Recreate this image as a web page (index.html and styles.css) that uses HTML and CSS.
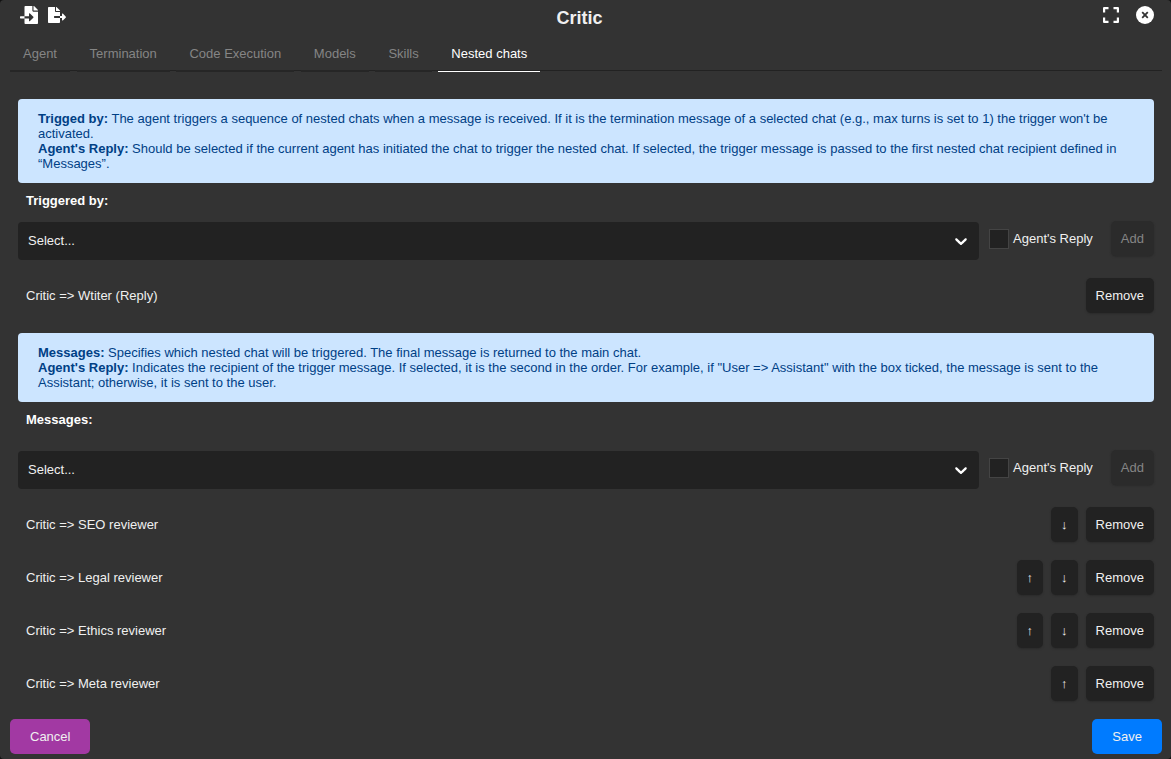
FILE: index.html
```html
<!DOCTYPE html>
<html lang="en">
<head>
<meta charset="utf-8">
<meta name="viewport" content="width=device-width, initial-scale=1">
<title>Critic</title>
<link rel="stylesheet" href="styles.css">
</head>
<body>
<main class="modal">
  <header class="header">
    <div class="tools">
      <button class="icon-btn" type="button" aria-label="Import">
        <svg width="18" height="18" viewBox="0 0 512 512" fill="currentColor"><path d="M16 288c-8.800 0-16 7.200-16 16v32c0 8.800 7.200 16 16 16h112v-64zm489-183L407.100 7c-4.500-4.500-10.600-7-17-7H384v128h128v-6.100c0-6.300-2.500-12.400-7-16.900zm-153 31V0H152c-13.300 0-24 10.700-24 24v264h128v-65.200c0-14.300 17.300-21.400 27.400-11.300L379 308c6.600 6.700 6.600 17.400 0 24l-95.700 96.400c-10.100 10.100-27.400 3-27.400-11.300V352H128v136c0 13.300 10.700 24 24 24h336c13.300 0 24-10.700 24-24V160H376c-13.200 0-24-10.800-24-24z"/></svg>
      </button>
      <button class="icon-btn" type="button" aria-label="Export">
        <svg width="18" height="16" viewBox="0 0 576 512" fill="currentColor"><path d="M384 121.900c0-6.300-2.500-12.400-7-16.900L279.100 7c-4.500-4.500-10.600-7-17-7H256v128h128zM571 308l-95.700-96.400c-10.100-10.100-27.400-3-27.400 11.300V288h-64v64h64v65.200c0 14.300 17.300 21.400 27.400 11.300L571 332c6.600-6.600 6.600-17.400 0-24zm-379 28v-32c0-8.800 7.200-16 16-16h176V160H248c-13.200 0-24-10.800-24-24V0H24C10.700 0 0 10.700 0 24v464c0 13.300 10.700 24 24 24h336c13.300 0 24-10.700 24-24V352H208c-8.800 0-16-7.200-16-16z"/></svg>
      </button>
    </div>
    <h1 class="title">Critic</h1>
    <div class="tools tools-end">
      <button class="icon-btn" type="button" aria-label="Full screen">
        <svg width="16" height="16" viewBox="0 0 16 16" fill="none" stroke="currentColor" stroke-width="2.200" stroke-linejoin="round"><path d="M1.100 5.500V1.100H5.500M10.500 1.100h4.400V5.500M14.900 10.500v4.400H10.500M5.500 14.900H1.100V10.500"/></svg>
      </button>
      <button class="icon-btn" type="button" aria-label="Close">
        <svg width="18" height="18" viewBox="0 0 18 18"><circle cx="9" cy="9" r="9" fill="currentColor"/><path d="M6.200 6.200l5.600 5.600M11.800 6.200l-5.600 5.600" stroke="#333" stroke-width="1.800"/></svg>
      </button>
    </div>
  </header>

  <nav class="tabs">
    <a class="tab" href="#agent">Agent</a>
    <a class="tab" href="#termination">Termination</a>
    <a class="tab" href="#code">Code Execution</a>
    <a class="tab" href="#models">Models</a>
    <a class="tab" href="#skills">Skills</a>
    <a class="tab active" href="#nested" aria-current="page">Nested chats</a>
  </nav>

  <section class="content" id="nested">
    <div class="alert">
      <p><strong>Trigged by:</strong> The agent triggers a sequence of nested chats when a message is received. If it is the termination message of a selected chat (e.g., max turns is set to 1) the trigger won't be activated.</p>
      <p><strong>Agent's Reply:</strong> Should be selected if the current agent has initiated the chat to trigger the nested chat. If selected, the trigger message is passed to the first nested chat recipient defined in “Messages”.</p>
    </div>
    <label class="field-label" for="trigger">Triggered by:</label>
    <div class="picker">
      <div class="select-wrap">
        <select class="select" id="trigger"><option>Select...</option></select>
        <svg class="chevron" width="20" height="20" viewBox="0 0 20 20" fill="currentColor"><path d="M4.516 7.548c0.436-0.446 1.043-0.481 1.576 0l3.908 3.747 3.908-3.747c0.533-0.481 1.141-0.446 1.574 0 0.436 0.445 0.408 1.197 0 1.615-0.406 0.418-4.695 4.502-4.695 4.502-0.217 0.223-0.502 0.335-0.787 0.335s-0.570-0.112-0.789-0.335c0 0-4.287-4.084-4.695-4.502s-0.436-1.170 0-1.615z"/></svg>
      </div>
      <label class="check"><input class="checkbox" type="checkbox">Agent's Reply</label>
      <button class="btn" type="button" disabled>Add</button>
    </div>
    <ul class="list">
      <li class="row"><span class="name">Critic =&gt; Wtiter (Reply)</span><button class="btn" type="button">Remove</button></li>
    </ul>

    <div class="alert alert-next">
      <p><strong>Messages:</strong> Specifies which nested chat will be triggered. The final message is returned to the main chat.</p>
      <p><strong>Agent's Reply:</strong> Indicates the recipient of the trigger message. If selected, it is the second in the order. For example, if "User =&gt; Assistant" with the box ticked, the message is sent to the Assistant; otherwise, it is sent to the user.</p>
    </div>
    <label class="field-label field-label-tall" for="messages">Messages:</label>
    <div class="picker">
      <div class="select-wrap">
        <select class="select" id="messages"><option>Select...</option></select>
        <svg class="chevron" width="20" height="20" viewBox="0 0 20 20" fill="currentColor"><path d="M4.516 7.548c0.436-0.446 1.043-0.481 1.576 0l3.908 3.747 3.908-3.747c0.533-0.481 1.141-0.446 1.574 0 0.436 0.445 0.408 1.197 0 1.615-0.406 0.418-4.695 4.502-4.695 4.502-0.217 0.223-0.502 0.335-0.787 0.335s-0.570-0.112-0.789-0.335c0 0-4.287-4.084-4.695-4.502s-0.436-1.170 0-1.615z"/></svg>
      </div>
      <label class="check"><input class="checkbox" type="checkbox">Agent's Reply</label>
      <button class="btn" type="button" disabled>Add</button>
    </div>
    <ul class="list">
      <li class="row"><span class="name">Critic =&gt; SEO reviewer</span><button class="btn" type="button" aria-label="Move down">↓</button><button class="btn" type="button">Remove</button></li>
      <li class="row"><span class="name">Critic =&gt; Legal reviewer</span><button class="btn" type="button" aria-label="Move up">↑</button><button class="btn" type="button" aria-label="Move down">↓</button><button class="btn" type="button">Remove</button></li>
      <li class="row"><span class="name">Critic =&gt; Ethics reviewer</span><button class="btn" type="button" aria-label="Move up">↑</button><button class="btn" type="button" aria-label="Move down">↓</button><button class="btn" type="button">Remove</button></li>
      <li class="row"><span class="name">Critic =&gt; Meta reviewer</span><button class="btn" type="button" aria-label="Move up">↑</button><button class="btn" type="button">Remove</button></li>
    </ul>
  </section>

  <footer class="footer">
    <button class="btn btn-cancel" type="button">Cancel</button>
    <button class="btn btn-save" type="button">Save</button>
  </footer>
</main>
</body>
</html>
```

FILE: styles.css
```css
* { box-sizing: border-box; }

body {
  margin: 0;
  background: #111;
  color: #f0f0f0;
  font: 13px/15px "Liberation Sans", Arial, sans-serif;
}

p, ul, h1 { margin: 0; padding: 0; }
button, select { font: inherit; color: inherit; }

.modal {
  min-height: 100vh;
  padding: 0 9px 5px 10px;
  background: #333;
  border-radius: 4px;
}

.header {
  display: flex;
  align-items: flex-start;
  padding: 6px 8px 0 10px;
  height: 36px;
}

.tools { display: flex; gap: 10px; }
.tools-end { gap: 17px; margin-left: 10px; }

.icon-btn {
  display: flex;
  align-items: center;
  height: 18px;
  padding: 0;
  border: 0;
  background: none;
  color: #fff;
}

.title {
  flex: 1;
  text-align: center;
  font-size: 18px;
  line-height: 24px;
}

.tabs {
  height: 35px;
  border-bottom: 1px solid #222;
}

.tab {
  display: inline-block;
  height: 36px;
  margin-right: 3px;
  padding: 10px 13px;
  border-bottom: 2px solid #262626;
  color: #858585;
  text-decoration: none;
}

.tab.active { color: #fff; border-bottom: 1px solid #fff; }

.content { padding: 28px 8px 0; }

.alert {
  padding: 12px 20px;
  border-radius: 4px;
  background: #cce5ff;
  color: #004085;
}

.alert-next { margin-top: 11px; }

.field-label {
  display: block;
  padding: 10px 8px 13px;
  font-weight: bold;
  color: #fff;
}

.field-label-tall { padding-bottom: 23px; }

.picker {
  display: flex;
  align-items: flex-start;
  min-height: 39px;
  margin-bottom: 9px;
}

.select-wrap {
  position: relative;
  flex: 1;
  align-self: flex-end;
  margin-right: 10px;
}

.select {
  display: block;
  width: 100%;
  height: 38px;
  padding: 0 10px 2px;
  border: 0;
  border-radius: 4px;
  appearance: none;
  background: #222;
}

.chevron {
  position: absolute;
  top: 9px;
  right: 8px;
  color: #fff;
  pointer-events: none;
}

.check {
  display: flex;
  align-items: center;
  gap: 4px;
  height: 35px;
  margin-right: 18px;
}

.checkbox {
  width: 20px;
  height: 20px;
  margin: 0;
  appearance: none;
  border: 1px solid #444;
  background: #222;
}

.btn {
  height: 35px;
  padding: 0 10px;
  border: 0;
  border-radius: 5px;
  background: #222;
  box-shadow: 0 1px 2px #2a2a2a;
}

.btn:disabled { background: #2b2b2b; color: #858585; }

.list { list-style: none; }

.row {
  display: flex;
  align-items: center;
  gap: 8px;
  height: 53px;
  padding-left: 8px;
}

.name { flex: 1; }

.footer {
  display: flex;
  justify-content: space-between;
  padding-top: 9px;
}

.btn-cancel { padding: 0 20px; background: #a239a3; box-shadow: none; }
.btn-save { padding: 0 20px; background: #007bff; box-shadow: none; }
```
